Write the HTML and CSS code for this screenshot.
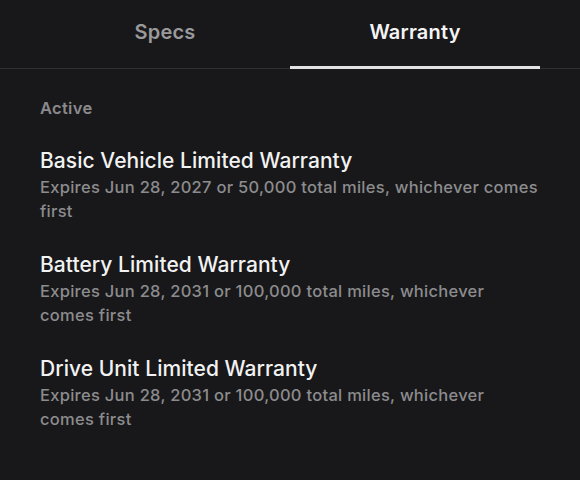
FILE: index.html
```html
<!DOCTYPE html>
<html lang="en">
<head>
<meta charset="utf-8">
<link rel="stylesheet" href="styles.css">
</head>
<body>
<div class="tabs">
  <div class="tab">Specs</div>
  <div class="tab active">Warranty</div>
</div>
<div class="content">
  <div class="section-label">Active</div>
  <div class="item">
    <div class="title">Basic Vehicle Limited Warranty</div>
    <div class="desc">Expires Jun 28, 2027 or 50,000 total miles, whichever comes first</div>
  </div>
  <div class="item">
    <div class="title">Battery Limited Warranty</div>
    <div class="desc">Expires Jun 28, 2031 or 100,000 total miles, whichever comes first</div>
  </div>
  <div class="item">
    <div class="title">Drive Unit Limited Warranty</div>
    <div class="desc">Expires Jun 28, 2031 or 100,000 total miles, whichever comes first</div>
  </div>
</div>
</body>
</html>
```
FILE: styles.css
```css
html, body {
  margin: 0;
  padding: 0;
  background: #18181a;
  height: 100%;
}
body {
  font-family: Inter, "Noto Sans", sans-serif;
  color: #eeeeee;
  overflow: hidden;
}
.tabs {
  display: flex;
  padding: 0 40px;
  border-bottom: 1px solid #303033;
  height: 68px;
}
.tab {
  flex: 1;
  display: flex;
  justify-content: center;
  align-items: center;
  font-size: 20px;
  font-weight: 600;
  color: #9a9a9c;
  padding-bottom: 6px;
  box-sizing: border-box;
  margin-bottom: -1px;
  letter-spacing: 0.2px;
}
.tab.active {
  color: #f4f4f4;
  border-bottom: 3px solid #e2e2e2;
  padding-bottom: 3px;
}
.content {
  padding: 27px 40px 0;
}
.section-label {
  font-size: 16.5px;
  font-weight: 600;
  color: #8a8a8c;
  line-height: 24px;
  margin-bottom: 27px;
  letter-spacing: 0.3px;
}
.item {
  margin-bottom: 28px;
}
.title {
  font-size: 21px;
  font-weight: 500;
  line-height: 28px;
  color: #f2f2f2;
  letter-spacing: 0.05px;
}
.desc {
  font-size: 16.5px;
  font-weight: 500;
  line-height: 24px;
  color: #8c8c8e;
  letter-spacing: 0.28px;
  max-width: 500px;
}
```
